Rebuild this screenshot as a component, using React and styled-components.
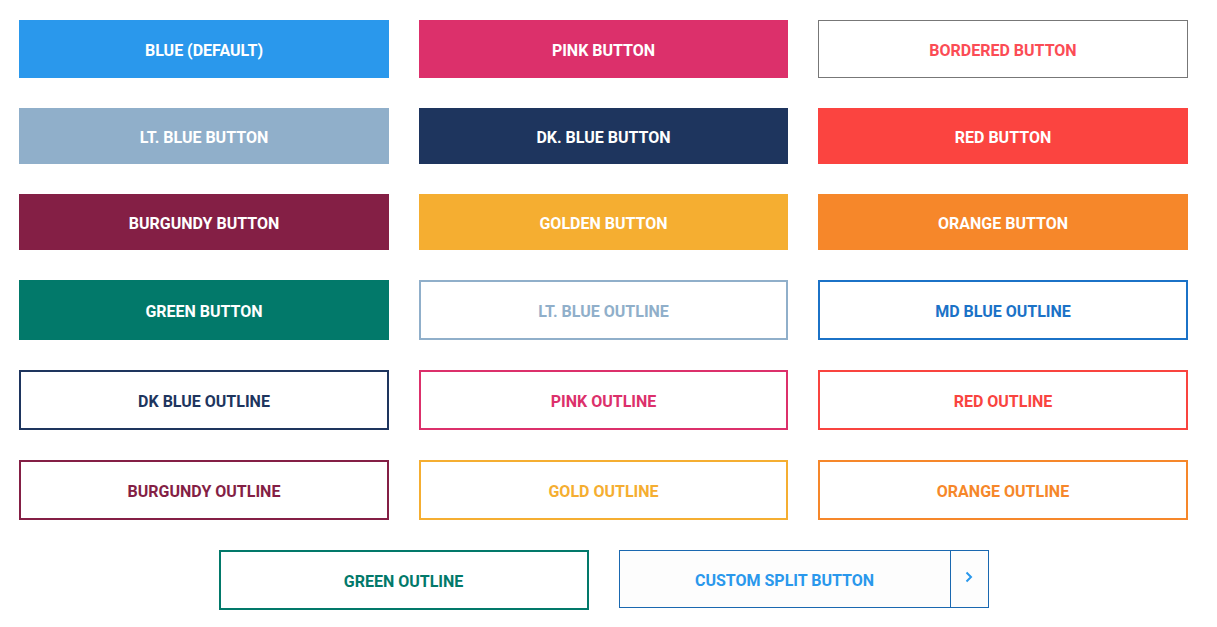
import { createGlobalStyle } from 'styled-components'
import styled from 'styled-components'

const GlobalStyle = createGlobalStyle`
  body {
    margin: 0;
    background: #fff;
    font-family: Roboto, 'Liberation Sans', sans-serif;
  }
`

const Page = styled.div`
  padding: 20px 29px 0 19px;
  display: flex;
  flex-direction: column;
  gap: 30px;
  width: 1169px;
`

const Grid = styled.div`
  display: grid;
  grid-template-columns: 370px 369px 370px;
  column-gap: 30px;
  row-gap: 30px;
  align-items: start;
`

const LastRow = styled.div`
  display: flex;
  justify-content: center;
  gap: 30px;
`

const Button = styled.button`
  box-sizing: border-box;
  width: 100%;
  height: ${(p) => p.$h || 60}px;
  margin: 0;
  padding: 2px 0 0;
  display: flex;
  align-items: center;
  justify-content: center;
  font-family: Roboto, 'Liberation Sans', sans-serif;
  font-weight: 700;
  font-size: 16px;
  text-transform: uppercase;
  cursor: pointer;
  background: ${(p) => (p.$outline ? '#fff' : p.$color)};
  color: ${(p) => (p.$outline ? p.$color : '#fff')};
  border: ${(p) => (p.$outline ? `${p.$bw || 2}px solid ${p.$border || p.$color}` : 'none')};
`

const WideButton = styled(Button)`
  width: 370px;
`

const Split = styled.div`
  box-sizing: border-box;
  width: 370px;
  height: 58px;
  display: flex;
  border: 1px solid #1a68b0;
  background: #fdfdfd;
`

const SplitMain = styled.button`
  flex: 1;
  border: none;
  background: transparent;
  color: #2a98ec;
  font-family: Roboto, 'Liberation Sans', sans-serif;
  font-weight: 700;
  font-size: 16px;
  text-transform: uppercase;
  padding: 2px 0 0;
  cursor: pointer;
`

const SplitToggle = styled.button`
  width: 38px;
  border: none;
  border-left: 1px solid #1a68b0;
  background: transparent;
  display: flex;
  align-items: center;
  justify-content: center;
  padding: 0 0 4px;
  cursor: pointer;
`

const rows = [
  { label: 'Blue (Default)', color: '#2a98ec', h: 58 },
  { label: 'Pink Button', color: '#dc306b', h: 58 },
  { label: 'Bordered Button', color: '#fb4c55', outline: true, border: '#777', bw: 1, h: 58 },
  { label: 'Lt. Blue Button', color: '#90afca', h: 56 },
  { label: 'Dk. Blue Button', color: '#1e355e', h: 56 },
  { label: 'Red Button', color: '#fb4440', h: 56 },
  { label: 'Burgundy Button', color: '#841f45', h: 56 },
  { label: 'Golden Button', color: '#f5ae31', h: 56 },
  { label: 'Orange Button', color: '#f6872a', h: 56 },
  { label: 'Green Button', color: '#02796a' },
  { label: 'Lt. Blue Outline', color: '#90afca', outline: true },
  { label: 'MD Blue Outline', color: '#1b72c7', outline: true },
  { label: 'DK Blue Outline', color: '#1e355e', outline: true },
  { label: 'Pink Outline', color: '#dc306b', outline: true },
  { label: 'Red Outline', color: '#f9443f', outline: true },
  { label: 'Burgundy Outline', color: '#841f45', outline: true },
  { label: 'Gold Outline', color: '#f5ae31', outline: true },
  { label: 'Orange Outline', color: '#f6872a', outline: true },
]

const App = () => {
  return (
    <>
      <GlobalStyle />
      <Page>
        <Grid>
          {rows.map((b) => (
            <Button
              key={b.label}
              $color={b.color}
              $outline={b.outline}
              $border={b.border}
              $bw={b.bw}
              $h={b.h}
            >
              {b.label}
            </Button>
          ))}
        </Grid>
        <LastRow>
          <WideButton $color="#02796a" $outline>
            Green Outline
          </WideButton>
          <Split>
            <SplitMain>Custom Split Button</SplitMain>
            <SplitToggle>
              <svg width="8" height="12" viewBox="0 0 8 12">
                <path d="M1.5 1.5 L6 6 L1.5 10.5" fill="none" stroke="#2a98ec" strokeWidth="2" />
              </svg>
            </SplitToggle>
          </Split>
        </LastRow>
      </Page>
    </>
  )
}

export default App
